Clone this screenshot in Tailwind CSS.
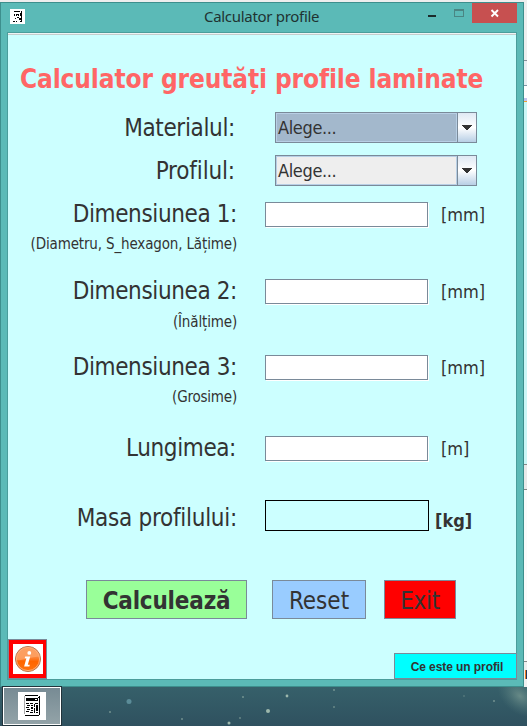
<!DOCTYPE html>
<html lang="ro">
<head>
<meta charset="utf-8">
<title>Calculator profile</title>
<script src="https://cdn.jsdelivr.net/npm/@tailwindcss/browser@4"></script>
</head>
<body class="w-[527px] h-[726px] overflow-hidden bg-[#eeeeee] flex flex-col font-['DejaVu_Sans_Condensed','DejaVu_Sans',sans-serif] text-[#333333]">
<div class="h-[2px] bg-[#eeeeee]"></div>
<div class="flex h-[685px]">
  <!-- Window -->
  <main class="w-[524px] h-[685px] bg-[#5bbab7] border border-[#3d8f8d] flex flex-col">
    <header class="h-[29px] flex relative">
      <svg class="ml-[9px] mt-[6px]" width="15" height="15" viewBox="0 0 15 15" shape-rendering="crispEdges"><path fill="#fff" d="M0 0h15v15H0z"/><path fill="#000" d="M4 2h6v1H4zM11 2h1v11h-1zM4 5h1v1H4zM6 5h3v1H6zM10 4h1v3h-1zM4 6h1v1H4zM6 6h1v1H6zM8 6h1v1H8zM5 9h1v1H5zM7 8h2v1H7zM9 9h2v2H9zM3 12h2v1H3zM6 12h1v1H6zM10 12h1v1h-1z"/></svg>
      <h2 class="ml-[179px] mt-[3px] text-[15px] leading-[20px] tracking-[-0.3px] whitespace-nowrap text-[#1f3332] font-['Noto_Sans',sans-serif]">Calculator profile</h2>
      <div class="ml-auto flex">
        <svg width="44" height="20" viewBox="0 0 44 20" shape-rendering="crispEdges"><path fill="#1b2b2b" d="M0 12h8v2H0z"/><path fill="#4a8583" fill-rule="evenodd" d="M26 6h10v8H26zM27 8v5h8V8z"/></svg>
        <div class="w-[45px] h-[20px] mr-[6px] bg-[#c75050]"><svg width="45" height="20" viewBox="0 0 45 20"><path d="M19.500 7l6.500 6.500M26 7l-6.500 6.500" stroke="#fff" stroke-width="1.9" fill="none"/></svg></div>
      </div>
    </header>
    <section class="ml-[6px] w-[510px] h-[648px] bg-[#ccffff] border border-[#4a9d9b] flex flex-col">
      <div class="h-px bg-[#eef4f4] shrink-0"></div><div class="h-px bg-[#c5cccc] shrink-0"></div>
      <h1 class="mt-[29px] ml-[12px] h-[30px] leading-[30px] text-[26px] font-bold text-[#ff6666] tracking-[-0.12px] whitespace-nowrap">Calculator greutăți profile laminate</h1>

      <div class="mt-[18px] h-[43px] flex items-start">
        <label class="w-[227px] text-right text-[24px] leading-[30px] mt-px tracking-[-0.35px]">Materialul:</label>
        <div class="ml-[40px] w-[202px] h-[31px] border border-[#7a8a99] flex">
          <div class="flex-1 border border-[#b8cfe5] bg-[#a3b8cc] text-[18px] leading-[28px] pl-[1px] tracking-[-0.35px]">Alege...</div>
          <div class="w-[19px] border-l border-[#7a8a99] bg-linear-to-b from-[#dfe9f4] via-white to-[#b8cfe5] flex items-center justify-center"><svg width="10" height="5" viewBox="0 0 10 5" shape-rendering="crispEdges"><path fill="#333" d="M0 0h10v1H0zM1 1h8v1H1zM2 2h6v1H2zM3 3h4v1H3zM4 4h2v1H4z"/></svg></div>
        </div>
      </div>
      <div class="h-[43px] flex items-start">
        <label class="w-[227px] text-right text-[24px] leading-[30px] mt-px tracking-[-0.15px]">Profilul:</label>
        <div class="ml-[40px] w-[202px] h-[31px] border border-[#7a8a99] flex">
          <div class="flex-1 border border-[#b8cfe5] bg-[#eeeeee] text-[18px] leading-[28px] pl-[1px] tracking-[-0.35px]">Alege...</div>
          <div class="w-[19px] border-l border-[#7a8a99] bg-linear-to-b from-[#dfe9f4] via-white to-[#b8cfe5] flex items-center justify-center"><svg width="10" height="5" viewBox="0 0 10 5" shape-rendering="crispEdges"><path fill="#333" d="M0 0h10v1H0zM1 1h8v1H1zM2 2h6v1H2zM3 3h4v1H3zM4 4h2v1H4z"/></svg></div>
        </div>
      </div>

      <div class="h-[77px] flex items-start">
        <div class="w-[229px] text-right"><div class="text-[24px] leading-[30px] mt-px tracking-[-0.38px]">Dimensiunea 1:</div><div class="text-[15px] leading-[20px] mt-[5px] tracking-[-0.15px] whitespace-nowrap">(Diametru, S_hexagon, Lățime)</div></div>
        <div class="ml-[28px] mt-[4px] w-[163px] h-[25px] bg-white border border-[#7a8a99] shadow-[1px_1px_0_#fff]"></div>
        <span class="ml-[13px] mt-[5px] text-[18px] leading-[24px]">[mm]</span>
      </div>
      <div class="h-[76px] flex items-start">
        <div class="w-[229px] text-right"><div class="text-[24px] leading-[30px] mt-px tracking-[-0.38px]">Dimensiunea 2:</div><div class="text-[15px] leading-[20px] mt-[6px] tracking-[-0.15px]">(Înălțime)</div></div>
        <div class="ml-[28px] mt-[4px] w-[163px] h-[25px] bg-white border border-[#7a8a99] shadow-[1px_1px_0_#fff]"></div>
        <span class="ml-[13px] mt-[5px] text-[18px] leading-[24px]">[mm]</span>
      </div>
      <div class="h-[81px] flex items-start">
        <div class="w-[229px] text-right"><div class="text-[24px] leading-[30px] mt-px tracking-[-0.38px]">Dimensiunea 3:</div><div class="text-[15px] leading-[20px] mt-[5px] tracking-[-0.2px]">(Grosime)</div></div>
        <div class="ml-[28px] mt-[4px] w-[163px] h-[25px] bg-white border border-[#7a8a99] shadow-[1px_1px_0_#fff]"></div>
        <span class="ml-[13px] mt-[5px] text-[18px] leading-[24px]">[mm]</span>
      </div>
      <div class="h-[68px] flex items-start">
        <div class="w-[228px] text-right text-[24px] leading-[30px] mt-px tracking-[-0.4px]">Lungimea:</div>
        <div class="ml-[29px] mt-[4px] w-[163px] h-[25px] bg-white border border-[#7a8a99] shadow-[1px_1px_0_#fff]"></div>
        <span class="ml-[13px] mt-[5px] text-[18px] leading-[24px]">[m]</span>
      </div>
      <div class="h-[80px] flex items-start">
        <div class="w-[229px] text-right text-[24px] leading-[30px] mt-[3px] tracking-[-0.28px]">Masa profilului:</div>
        <div class="ml-[28px] w-[164px] h-[31px] border border-black"></div>
        <span class="ml-[6px] mt-[9px] text-[18px] leading-[24px] font-bold">[kg]</span>
      </div>

      <div class="flex ml-[78px] h-[39px] text-[24px] leading-[32px] shrink-0">
        <button class="w-[161px] h-[39px] pt-[3px] border border-[#7a8a99] bg-[#99ff99] font-bold tracking-[-0.2px]">Calculează</button>
        <button class="ml-[25px] w-[94px] h-[39px] pt-[3px] border border-[#7a8a99] bg-[#99ccff]">Reset</button>
        <button class="ml-[18px] w-[72px] h-[39px] pt-[3px] border border-[#7a8a99] bg-[#ff0000] tracking-[-0.3px]">Exit</button>
      </div>

      <div class="mt-auto flex items-end">
        <button class="w-[39px] h-[40px] shrink-0 border border-[#7a8a99] bg-[#ff0000] flex items-center justify-center">
          <svg width="30" height="30" viewBox="0 0 30 30"><defs><linearGradient id="g" x1="0" y1="0" x2="0" y2="1"><stop offset="0" stop-color="#f58a45"/><stop offset=".45" stop-color="#fb8336"/><stop offset=".6" stop-color="#ff6500"/><stop offset="1" stop-color="#ff7410"/></linearGradient></defs><path fill="#fff" d="M0 0h30v30H0z"/><circle cx="15" cy="15" r="12.500" fill="url(#g)" stroke="#b8714a" stroke-width="1"/><circle cx="15" cy="15" r="11.600" fill="none" stroke="#ffc49c" stroke-width=".7"/><path fill="#ffb27e" opacity=".55" d="M3.500 16C3.500 8 9 3.500 15 3.500S26 8 26.500 13C20 12 11 17 3.500 16z"/><circle cx="16.300" cy="8.900" r="1.900" fill="#fff"/><path fill="#fff" d="M12.200 12.500h5l-2.400 8.200h2l-.4 1.700h-5.300l2.300-8.200h-1.700z"/></svg>
        </button>
        <button class="ml-[347px] w-[123px] h-[26px] shrink-0 border border-[#7a8a99] bg-[#00ffff] text-[12px] leading-[22px] font-bold whitespace-nowrap tracking-[-0.08px] pl-[3px] pt-px font-['Liberation_Sans',Arial,sans-serif]">Ce este un profil</button>
      </div>
    </section>
  </main>
  <!-- Sliver of the window behind -->
  <aside class="w-[3px] flex flex-col">
    <div class="h-[58px] bg-[#eeeeee]"></div>
    <div class="h-px bg-[#8a8f99]"></div>
    <div class="h-[24px] bg-[#e9eef2]"></div>
    <div class="h-px bg-[#8295a5]"></div>
    <div class="h-[12px] bg-white"></div>
    <div class="h-[3px] bg-[#c5c5ee]"></div>
    <div class="h-px bg-[#f0a030]"></div>
    <div class="h-[362px] bg-[#ccf7f7]"></div>
    <div class="h-px bg-[#888888]"></div>
    <div class="h-[24px] bg-[#e9e9e9]"></div>
    <div class="h-px bg-[#888888]"></div>
    <div class="h-[171px] bg-[#fafafa]"></div>
    <div class="h-px bg-[#888888]"></div>
    <div class="h-[8px] bg-[#eeeeee]"></div>
    <div class="h-[9px] bg-[#eeeeee] flex"><div class="ml-px w-px h-[9px] bg-[#f08020]"></div><div class="w-px h-[9px] bg-[#26365e]"></div></div>
    <div class="flex-1 bg-[#f0f0f0]"></div>
  </aside>
</div>
<!-- Taskbar -->
<footer class="relative h-[39px] bg-linear-to-b from-[#36606a] to-[#2f515f] flex items-start pl-[3px]">
  <svg class="absolute right-0 top-0" width="465" height="39" viewBox="62 0 465 39"><defs><radialGradient id="n"><stop offset="0" stop-color="#8aa89c" stop-opacity=".6"/><stop offset="1" stop-color="#5d8582" stop-opacity="0"/></radialGradient></defs><ellipse cx="520" cy="9" rx="26" ry="17" transform="rotate(40 520 9)" fill="url(#n)"/><g fill="#9db8ac"><circle cx="129" cy="14.500" r="2.500" fill="#5b8c98"/><circle cx="110" cy="25" r="1" opacity=".6"/><circle cx="182" cy="32" r="1" opacity=".6"/><circle cx="229" cy="36" r="1.500"/><circle cx="243" cy="10" r="1" opacity=".6"/><circle cx="240" cy="31" r="1" opacity=".5"/><circle cx="268" cy="24" r="2"/><circle cx="287" cy="9" r="1.400"/><circle cx="334" cy="3" r="1" opacity=".6"/><circle cx="334" cy="20" r="1" opacity=".5"/><circle cx="464" cy="9" r=".8" opacity=".5"/><circle cx="494" cy="14" r="1" opacity=".6"/></g></svg>
  <div class="relative w-[58px] h-[38px] border border-white bg-linear-to-b from-[#778b94] to-[#93a3a8] outline outline-[#22343c] flex justify-center pt-[4px]">
    <svg width="28" height="28" viewBox="0 0 28 28" shape-rendering="crispEdges"><path fill="#fff" d="M0 0h28v28H0z"/><path fill="#aaa" d="M6 4h1v18H6z"/><path fill="#000" d="M7 3h13v1H7zM21 4h1v19h-1zM20 5h1v1h-1zM8 6h12v3H8zM8 11h3v1H8zM12 11h3v1h-3zM17 11h3v1h-3zM9 13h3v1H9zM13 13h2v1h-2zM16 12h1v3h-1zM18 13h2v6h-2zM8 15h3v1H8zM13 15h2v2h-2zM9 17h3v1H9zM16 16h1v5h-1zM8 19h3v1H8zM13 18h2v1h-2zM12 20h3v1h-3zM18 20h2v1h-2zM7 23h14v1H7z"/><path fill="#fff" d="M17 7h2v1h-2z"/></svg>
  </div>
</footer>
</body>
</html>
